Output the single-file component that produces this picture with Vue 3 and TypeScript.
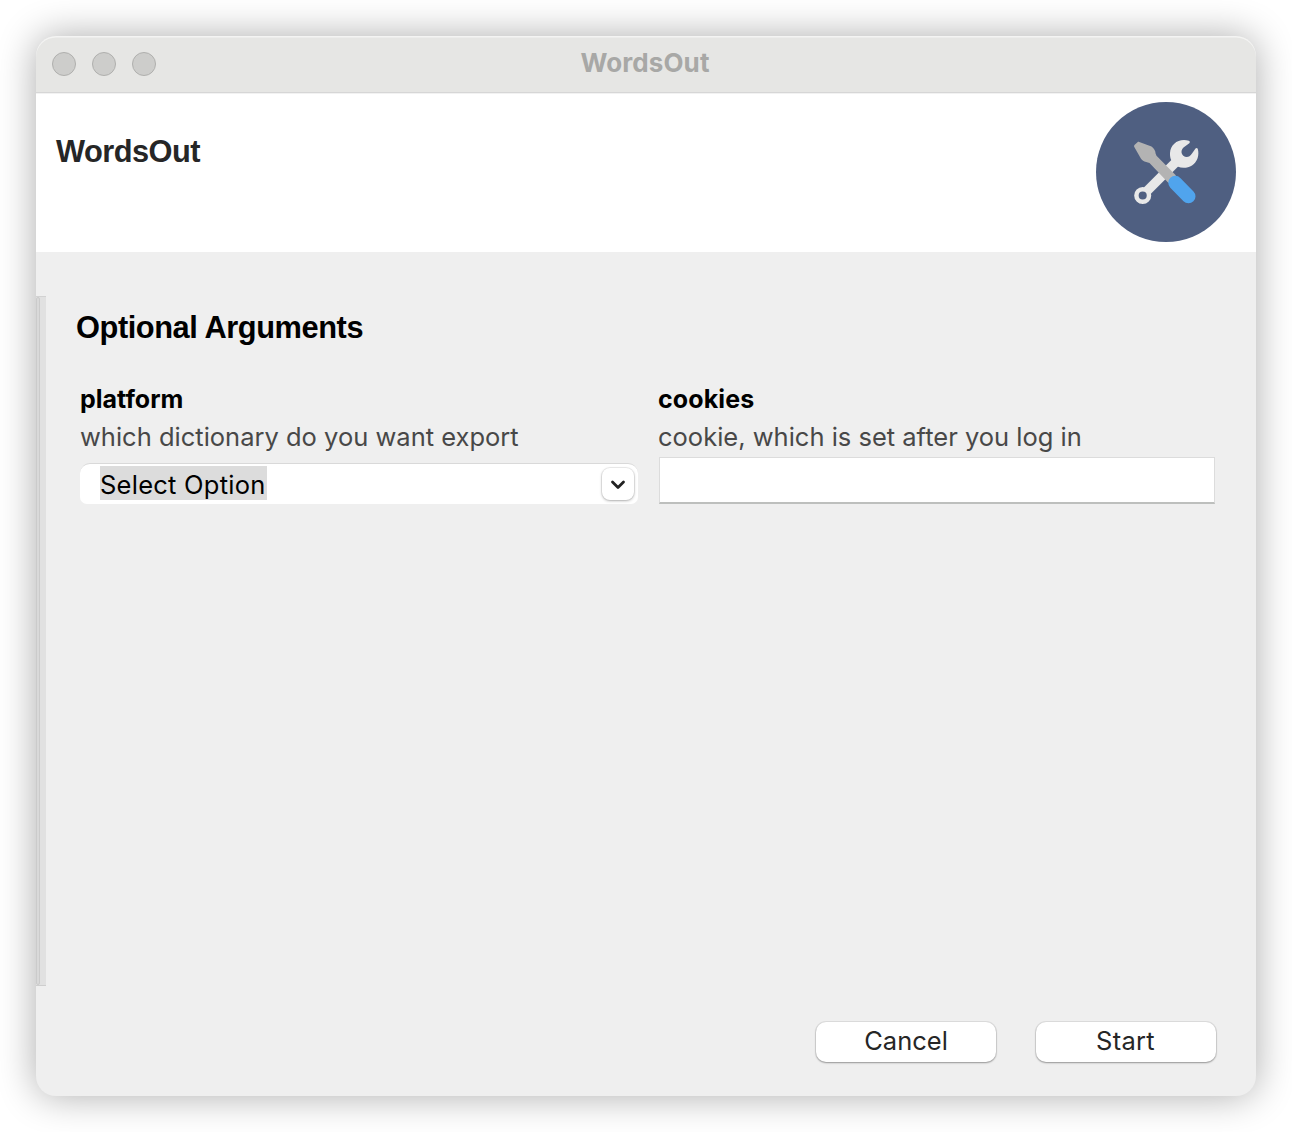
<script setup lang="ts">
import { ref } from 'vue'

const appName = 'WordsOut'
const cookies = ref('')
const lights = ['close', 'minimize', 'zoom']
</script>

<template>
  <div class="desktop">
    <main class="window">
      <header class="titlebar">
        <div class="lights">
          <span v-for="light in lights" :key="light" class="light"></span>
        </div>
        <span class="window-title">{{ appName }}</span>
      </header>

      <section class="banner">
        <h1>{{ appName }}</h1>
        <svg class="logo" viewBox="0 0 140 140" width="140" height="140">
          <circle cx="70" cy="70" r="70" fill="#4f5f81" />
          <path d="M51 89 L82 58" stroke="#e8e8e8" stroke-width="9.500" />
          <circle cx="46.7" cy="93.500" r="6.300" fill="#4f5f81" stroke="#e8e8e8" stroke-width="4.500" />
          <path
            d="M92.800 38.800 C83 36 74.500 42 74 51 C73.900 54 74.300 56.500 75.500 58.500 L81.500 64.500 C86 66.500 91.500 66.300 96 63.500 C101.500 60 103.500 53 101.800 47 C101.300 45.700 100.300 45.600 99.500 46.600 L96 51.500 C93.500 55.500 90 56 87.300 53.700 C84.800 51.500 85 48 87.500 45.600 L93.300 41.300 C94.200 40.500 94 39.200 92.800 38.800 Z"
            fill="#e8e8e8"
          />
          <path
            d="M43.300 40 L55.500 44.500 C58 46 59.500 49 59.600 51.500 L60.500 53.700 L80 73.500 L72.500 81 L53.500 61 L48.500 59.500 C46.500 59 45 57 44 55 L38.300 45 C37.900 44.200 38 43.500 38.700 42.700 L41.500 40.200 C42 39.700 42.700 39.700 43.300 40 Z"
            fill="#b3b3b3"
          />
          <path
            d="M79.300 80.800 L92.500 94.300"
            stroke="#50a4ed"
            stroke-width="14"
            stroke-linecap="round"
          />
        </svg>
      </section>

      <div class="content">
        <div class="edge"><span class="edge-thumb"></span></div>
        <form class="arguments" @submit.prevent>
          <h2>Optional Arguments</h2>
          <div class="fields">
            <div class="field">
              <label class="name platform">platform</label>
              <p class="help platform-help">which dictionary do you want export</p>
              <div class="combo">
                <span class="selection">Select Option</span>
                <span class="arrow">
                  <svg width="32" height="32" viewBox="0 0 32 32">
                    <path d="M10.500 14 L16 19.500 L21.500 14" fill="none" stroke="#222" stroke-width="2.800" stroke-linecap="round" stroke-linejoin="round" />
                  </svg>
                </span>
              </div>
            </div>
            <div class="field">
              <label class="name cookies" for="cookies">cookies</label>
              <p class="help cookies-help">cookie, which is set after you log in</p>
              <input id="cookies" v-model="cookies" class="entry" type="text" />
            </div>
          </div>
        </form>
      </div>

      <footer class="actions">
        <button type="button" class="cancel">Cancel</button>
        <button type="button" class="start">Start</button>
      </footer>
    </main>
  </div>
</template>

<style>
body {
  background: #fff;
}
</style>

<style scoped>
.desktop {
  box-sizing: border-box;
  width: 1292px;
  height: 1132px;
  padding: 36px;
  overflow: hidden;
  background: #fff;
  font-family: Inter, 'Liberation Sans', sans-serif;
}

.window {
  display: flex;
  flex-direction: column;
  height: 1060px;
  border-radius: 20px;
  overflow: hidden;
  background: #efefef;
  box-shadow: 0 0 38px rgba(0, 0, 0, 0.33);
}

.titlebar {
  box-sizing: border-box;
  display: grid;
  grid-template-columns: 1fr auto 1fr;
  align-items: center;
  height: 58px;
  padding: 0 16px 1px;
  border-bottom: 1px solid #f2f2f2;
  background: #e6e6e4;
  border-radius: 20px 20px 0 0;
  box-shadow: inset 0 1.500px 0 #f4f4f3, inset 0 -1px 0 #d6d6d6;
}

.lights {
  display: flex;
  gap: 16px;
}

.light {
  box-sizing: border-box;
  width: 24px;
  height: 24px;
  border: 1px solid #afafad;
  border-radius: 50%;
  background: #cdcdcb;
}

.window-title {
  padding: 0 2px 2px 0;
  color: #a8a8a6;
  font-size: 26px;
  font-weight: 700;
  line-height: 32px;
  letter-spacing: 0.1px;
}

.banner {
  box-sizing: border-box;
  display: flex;
  justify-content: space-between;
  height: 158px;
  padding: 8px 20px 0;
  background: #fff;
}

h1,
h2 {
  margin: 0;
  font-family: 'Liberation Sans', Arial, sans-serif;
  font-weight: 700;
  line-height: 36px;
}

h1 {
  margin-top: 32px;
  color: #262626;
  font-size: 30.800px;
  letter-spacing: -0.550px;
}

.content {
  display: flex;
  height: 690px;
  margin-top: 44px;
}

.edge {
  box-sizing: border-box;
  width: 10px;
  border-top: 1px solid #d2d2d2;
  border-bottom: 1px solid #cecece;
  background: #e1e1e1;
}

.edge-thumb {
  box-sizing: border-box;
  display: block;
  width: 4px;
  height: 100%;
  border: 1px solid #cbcbcb;
  border-radius: 2px;
  background: #d9d9d9;
}

.arguments {
  flex: 1;
  padding: 14px 41px 0 30px;
}

h2 {
  color: #000;
  font-size: 30.800px;
  letter-spacing: -0.430px;
}

.fields {
  display: grid;
  grid-template-columns: 558px 556px;
  gap: 20px;
  margin: 34px 0 0 4px;
}

.field {
  display: flex;
  flex-direction: column;
}

.name {
  color: #000;
  font-size: 25px;
  font-weight: 700;
  line-height: 38px;
}

.cookies {
  letter-spacing: 0.1px;
}

.help {
  margin: 0;
  color: #484848;
  font-size: 25.500px;
  line-height: 38px;
  white-space: nowrap;
}

.combo {
  box-sizing: border-box;
  display: flex;
  align-items: flex-start;
  justify-content: space-between;
  height: 41px;
  margin-top: 7px;
  padding: 2px 4px 0 20px;
  border-top: 1px solid #d9d9d9;
  border-radius: 10px 10px 7px 7px;
  background: #fff;
}

.selection {
  height: 34px;
  background: #dcdcdc;
  color: #000;
  font-size: 25.500px;
  letter-spacing: 0.250px;
  padding-right: 1px;
  line-height: 38px;
  white-space: nowrap;
}

.arrow {
  width: 32px;
  height: 32px;
  margin-top: 2px;
  border-radius: 8px;
  background: #fff;
  box-shadow: 0 0 0 1px rgba(0, 0, 0, 0.06), 0 1px 3px rgba(0, 0, 0, 0.28);
}

.arrow svg {
  display: block;
}

.entry {
  box-sizing: border-box;
  width: 556px;
  height: 47px;
  margin: 1px 0 0 1px;
  padding: 0 8px;
  border: 1px solid #dcdcdc;
  border-bottom: 2px solid #bdbfbd;
  border-radius: 0;
  outline: 0;
  background: #fff;
  font: inherit;
  font-size: 25.500px;
}

.actions {
  display: flex;
  justify-content: flex-end;
  gap: 40px;
  padding: 36px 40px 0 0;
}

button {
  width: 180px;
  height: 40px;
  padding: 0 0 2px;
  border: 0;
  border-radius: 10px;
  background: #fff;
  box-shadow: 0 0 0 1px rgba(0, 0, 0, 0.07), 0 1px 2px rgba(0, 0, 0, 0.33);
  color: #262626;
  font-family: inherit;
  font-size: 25.500px;
  line-height: 38px;
}

.start {
  padding-right: 1px;
  letter-spacing: 0.3px;
}
</style>
